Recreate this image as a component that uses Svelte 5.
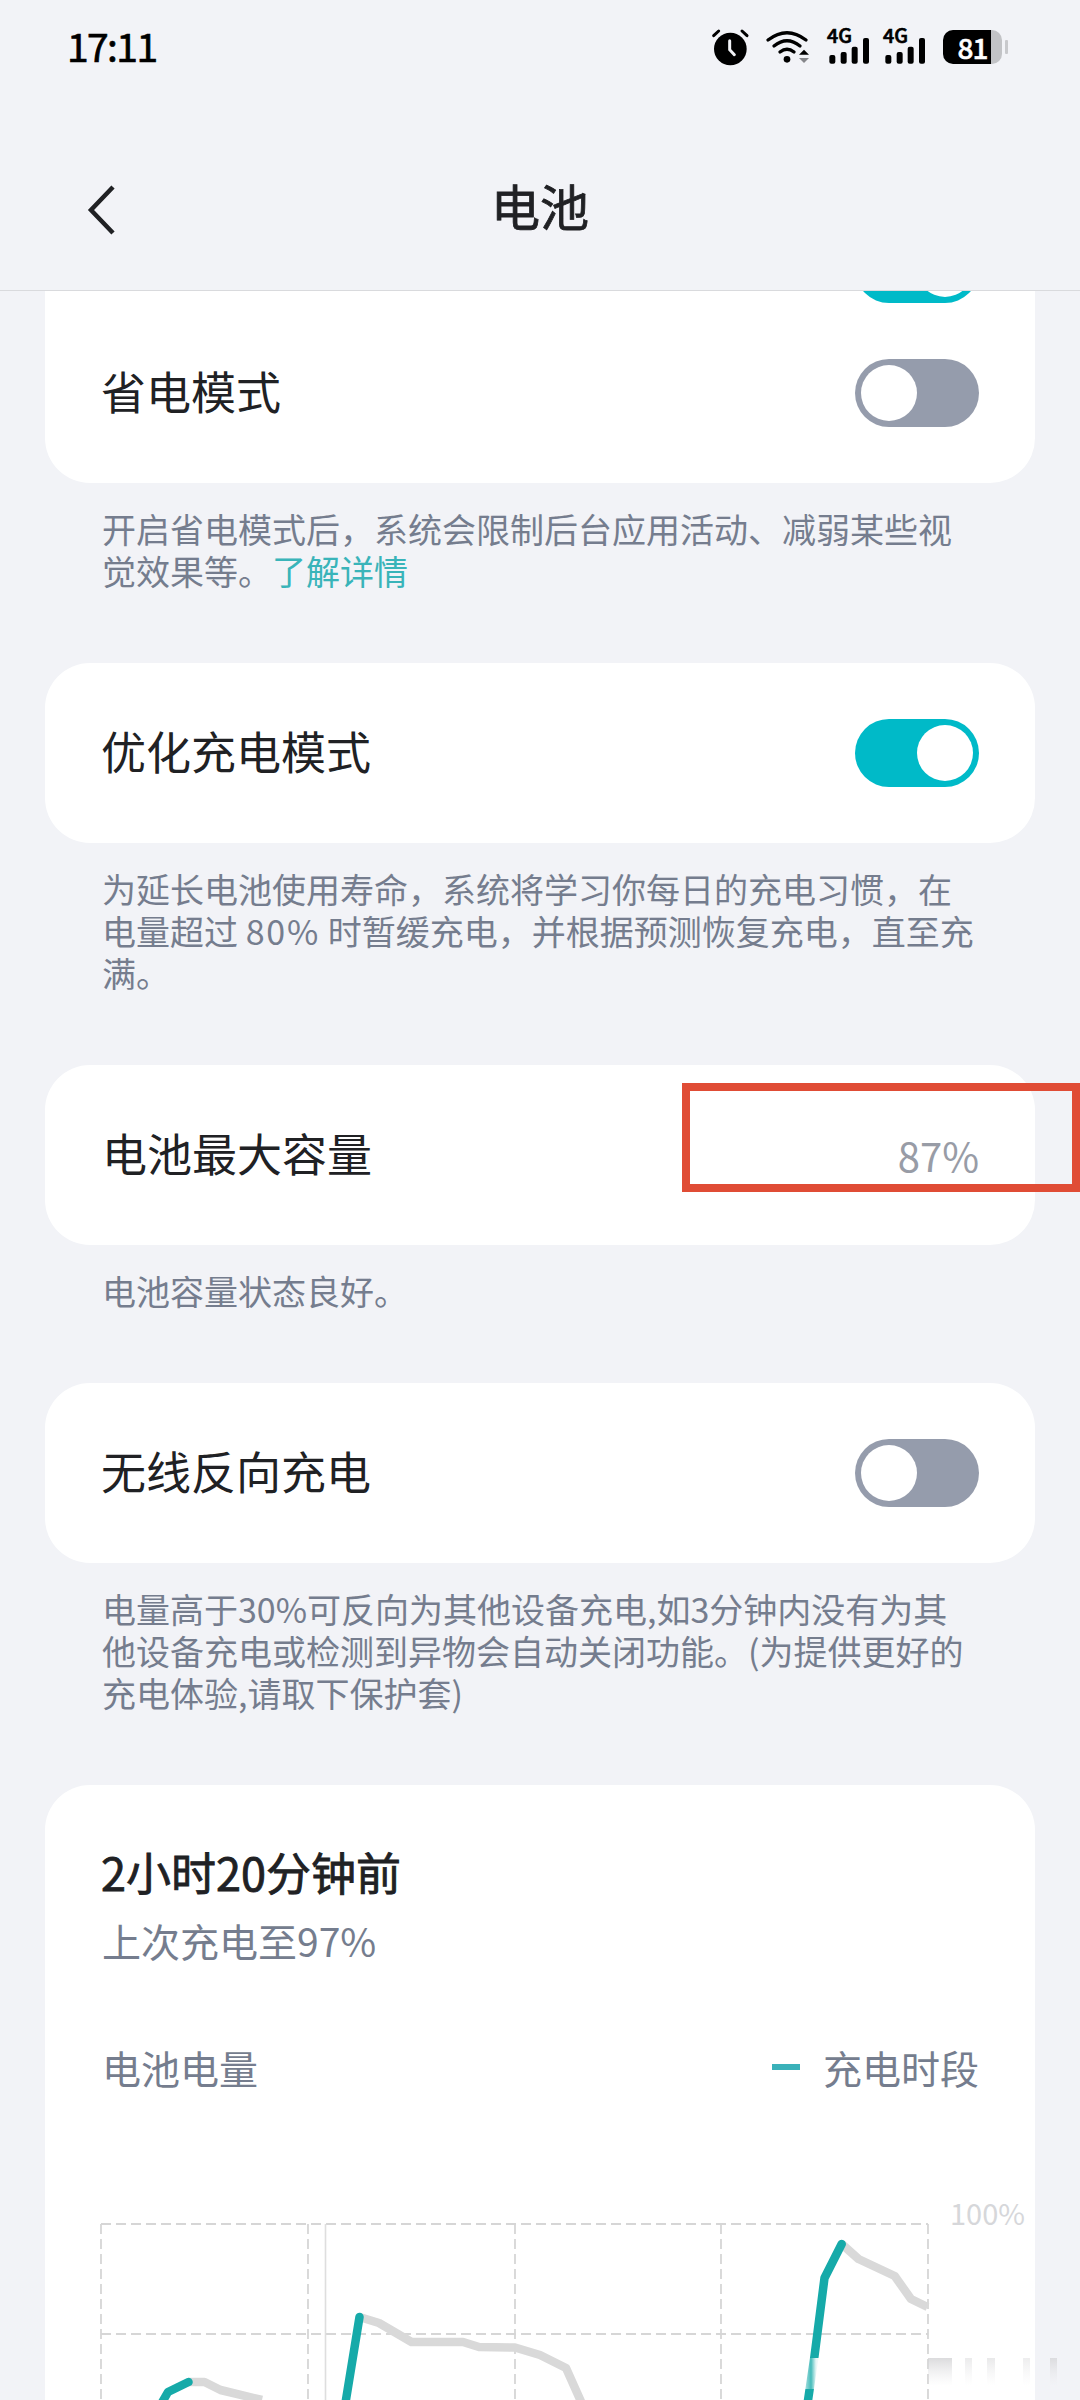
<script>
  const gridColumns = [101, 308, 515, 721, 928];
  const gridRows = [2, 112];
  const charging = [
    '160,184 168,170 188.5,160',
    '343,196 359.5,95',
    '806,192 814.5,134 824.5,56 841.7,22'
  ];
  const draining = [
    '188.5,160 204.5,160 220.5,168 262,178',
    '359.5,95 379,101 411.5,120 463,120 479,125 515,125.5 540,133 566,146 583,184',
    '841.7,22 858.5,37 894.7,54 911,77 927.5,85'
  ];
  const smudges = [
    { x: 928, w: 24, o: 0.8 },
    { x: 965, w: 7, o: 0.45 },
    { x: 987, w: 8, o: 0.5 },
    { x: 1023, w: 7, o: 0.4 },
    { x: 1050, w: 7, o: 0.7 }
  ];
</script>

{#snippet toggle(on)}
  <span class="toggle" class:on><span class="knob"></span></span>
{/snippet}

{#snippet signal()}
  <svg class="signal" viewBox="0 0 132 120">
    <text x="0" y="47" class="net">4G</text>
    <rect x="7" y="84" width="18" height="26" rx="6" />
    <rect x="41" y="75" width="18" height="35" rx="6" />
    <rect x="74" y="59" width="18" height="51" rx="6" />
    <rect x="108" y="33" width="18" height="77" rx="6" />
  </svg>
{/snippet}

<div class="screen">
  <header>
    <div class="status">
      <span class="time">17:11</span>
      <div class="icons">
        <svg class="alarm" viewBox="0 0 110 120">
          <circle cx="55" cy="66" r="49" />
          <path class="ear" d="M5 26 L20 12 M90 12 L105 26" />
          <path class="hand" d="M53 41 V68 L67 83" />
        </svg>
        <svg class="wifi" viewBox="0 0 132 120">
          <path class="arc" d="M6 39 Q63 -5 120 39 M24 57 Q63 25 102 57 M42 75 Q63 58 84 75" />
          <circle cx="63" cy="97" r="10" />
          <path d="M114 68 L129 83 H99 Z" />
          <path class="down" d="M114 108 L129 93 H99 Z" />
        </svg>
        {@render signal()}
        {@render signal()}
        <div class="battery"><span>81</span></div>
        <div class="tip"></div>
      </div>
    </div>
    <div class="nav">
      <svg class="back" viewBox="0 0 30 52"><path d="M26 3 L4 26 L26 49" /></svg>
      <h1>电池</h1>
    </div>
  </header>

  <main>
    <section class="card first">
      <div class="clipped">{@render toggle(true)}</div>
      <div class="row"><h2>省电模式</h2>{@render toggle(false)}</div>
    </section>
    <p class="note">开启省电模式后，系统会限制后台应用活动、减弱某些视<br />觉效果等。<a>了解详情</a></p>

    <section class="card row"><h2>优化充电模式</h2>{@render toggle(true)}</section>
    <p class="note">为延长电池使用寿命，系统将学习你每日的充电习惯，在<br />电量超过 <span class="num">80%</span> 时暂缓充电，并根据预测恢复充电，直至充<br />满。</p>

    <section class="card row capacity">
      <h2>电池最大容量</h2><span class="value">87%</span>
      <div class="highlight"></div>
    </section>
    <p class="note">电池容量状态良好。</p>

    <section class="card row"><h2>无线反向充电</h2>{@render toggle(false)}</section>
    <p class="note">电量高于30%可反向为其他设备充电,如3分钟内没有为其<br />他设备充电或检测到异物会自动关闭功能。(为提供更好的<br />充电体验,请取下保护套)</p>

    <section class="card usage">
      <h3>2小时20分钟前</h3>
      <p class="last">上次充电至97%</p>
      <div class="legend">
        <span>电池电量</span>
        <span class="key"><i></i>充电时段</span>
      </div>
      <svg class="chart" viewBox="45 -38 990 216">
        <defs>
          <linearGradient id="fade" x1="0" y1="0" x2="0" y2="1">
            <stop offset="0" stop-color="#d2d2d4" />
            <stop offset="1" stop-color="#e8e8ea" stop-opacity="0" />
          </linearGradient>
          <linearGradient id="veil" x1="0" y1="0" x2="1" y2="0">
            <stop offset="0" stop-color="#fff" stop-opacity="0.85" />
            <stop offset="0.45" stop-color="#fff" stop-opacity="0.2" />
            <stop offset="0.7" stop-color="#fff" stop-opacity="0.9" />
            <stop offset="1" stop-color="#fff" />
          </linearGradient>
        </defs>
        <g class="grid">
          {#each gridRows as y}<line x1="101" x2="928" y1={y} y2={y} />{/each}
          {#each gridColumns as x}<line x1={x} x2={x} y1="2" y2="182" />{/each}
        </g>
        <line class="day" x1="325.5" x2="325.5" y1="2" y2="182" />
        {#each draining as points}<polyline class="drain" {points} />{/each}
        {#each charging as points}<polyline class="charge" {points} />{/each}
        <rect x="802" y="136" width="20" height="31" fill="url(#veil)" />
        {#each smudges as s}
          <rect x={s.x} y="136" width={s.w} height="28" fill="url(#fade)" opacity={s.o} />
        {/each}
        <text x="950" y="3" class="axis">100%</text>
      </svg>
    </section>
  </main>
</div>

<style>
  :global(body) {
    background: #f2f3f7;
  }
  .screen {
    width: 1080px;
    height: 2400px;
    overflow: hidden;
    display: flex;
    flex-direction: column;
    background: #f2f3f7;
    font-family: 'Noto Sans CJK SC', sans-serif;
    color: #202124;
  }
  h1, h2, h3, p {
    margin: 0;
    font-weight: 400;
    white-space: nowrap;
  }
  header {
    flex: none;
    height: 291px;
    box-sizing: border-box;
    border-bottom: 1.5px solid #d9dadd;
  }
  .status {
    height: 96px;
    display: flex;
    justify-content: space-between;
    padding: 0 72px 0 67px;
  }
  .time {
    font-size: 39px;
    line-height: 91px;
    font-weight: 400;
    letter-spacing: -1.6px;
    color: #000;
    -webkit-text-stroke: 0.7px #000;
  }
  .icons {
    display: flex;
    align-items: flex-start;
    padding-top: 27px;
  }
  .icons svg {
    height: 40px;
    overflow: visible;
  }
  .alarm {
    width: 36.7px;
    margin-right: 18px;
  }
  .ear {
    fill: none;
    stroke: #000;
    stroke-width: 9;
    stroke-linecap: round;
  }
  .hand {
    fill: none;
    stroke: #f2f3f7;
    stroke-width: 9;
    stroke-linecap: round;
  }
  .wifi {
    width: 44px;
    margin-right: 16.6px;
  }
  .arc {
    fill: none;
    stroke: #000;
    stroke-width: 10;
    stroke-linecap: round;
  }
  .down {
    fill: #85868a;
  }
  .signal {
    width: 44px;
    margin-right: 12px;
  }
  .net {
    font-size: 59px;
    font-weight: 500;
    stroke: #000;
    stroke-width: 2;
  }
  .battery {
    width: 59px;
    height: 34px;
    margin: 3px 3px 0 4px;
    border-radius: 10px;
    background: linear-gradient(90deg, #000 48px, #c2c3c6 48px);
    color: #fff;
    font-size: 28px;
    font-weight: 500;
    line-height: 34px;
    text-indent: 14.5px;
    letter-spacing: -1px;
    -webkit-text-stroke: 0.5px #fff;
  }
  .tip {
    width: 3px;
    height: 14px;
    margin-top: 13px;
    border-radius: 1px;
    background: #c8c9cc;
  }
  .nav {
    height: 194px;
    display: grid;
    grid-template-columns: 1fr auto 1fr;
    align-items: center;
    box-sizing: border-box;
    padding: 27px 86px 0;
  }
  .back {
    width: 30px;
    height: 52px;
    margin-top: 6px;
    margin-left: 1px;
    fill: none;
    stroke: #202124;
    stroke-width: 4.5;
  }
  h1 {
    font-size: 49px;
    line-height: 60px;
    -webkit-text-stroke: 0.8px #202124;
    margin-top: -4px;
  }
  main {
    flex: 1;
    min-height: 0;
    overflow: hidden;
  }
  .card {
    width: 990px;
    margin: 0 auto;
    box-sizing: border-box;
    border-radius: 45px;
    background: #fff;
  }
  .first {
    border-radius: 0 0 45px 45px;
  }
  .clipped {
    height: 12px;
    display: flex;
    justify-content: flex-end;
    align-items: flex-end;
    padding-right: 56px;
    overflow: hidden;
  }
  .row {
    height: 180px;
    display: flex;
    align-items: center;
    justify-content: space-between;
    padding: 0 56px;
    box-sizing: border-box;
  }
  h2 {
    font-size: 45px;
    line-height: 60px;
    padding-bottom: 4px;
  }
  .toggle {
    flex: none;
    width: 124px;
    height: 68px;
    box-sizing: border-box;
    padding: 6px;
    border-radius: 34px;
    display: flex;
    background: #959cac;
  }
  .toggle.on {
    justify-content: flex-end;
    background: #00bac8;
  }
  .knob {
    width: 56px;
    height: 56px;
    border-radius: 50%;
    background: #fff;
  }
  .note {
    padding: 25px 0 71px 102px;
    font-size: 34px;
    line-height: 42px;
    color: #757d8e;
  }
  .note a {
    color: #39b4b9;
  }
  .num {
    letter-spacing: 1.8px;
  }
  .capacity {
    position: relative;
  }
  .capacity h2 {
    padding-left: 1px;
  }
  .value {
    font-size: 40px;
    color: #989ca6;
  }
  .highlight {
    position: absolute;
    left: 637px;
    top: 18px;
    width: 398px;
    height: 109px;
    box-sizing: border-box;
    border: 8.5px solid #e04c35;
  }
  .usage {
    height: 700px;
    padding-top: 57px;
  }
  h3 {
    padding-left: 56px;
    font-size: 45px;
    line-height: 60px;
    -webkit-text-stroke: 0.8px #202124;
  }
  .last {
    padding-left: 57px;
    margin-top: 13px;
    font-size: 39px;
    line-height: 50px;
    color: #757d8e;
  }
  .legend {
    display: flex;
    justify-content: space-between;
    padding: 0 56px 0 57px;
    margin-top: 77px;
    font-size: 39px;
    line-height: 50px;
    color: #757d8e;
  }
  .key {
    display: flex;
    align-items: center;
    gap: 23px;
  }
  .key i {
    width: 28px;
    height: 6px;
    background: #3ab1b9;
  }
  .chart {
    display: block;
    width: 990px;
    height: 216px;
    margin-top: 92px;
    overflow: visible;
  }
  .grid line {
    stroke: #d6d6d6;
    stroke-width: 1.8;
    stroke-dasharray: 10 5;
  }
  .day {
    stroke: #dedede;
    stroke-width: 1.6;
  }
  .drain, .charge {
    fill: none;
    stroke-width: 8.5;
    stroke-linejoin: round;
  }
  .drain {
    stroke: #d9d9d9;
  }
  .charge {
    stroke: #16aaa9;
    stroke-linecap: round;
  }
  .axis {
    font-size: 29px;
    fill: #d6d7da;
  }
</style>
